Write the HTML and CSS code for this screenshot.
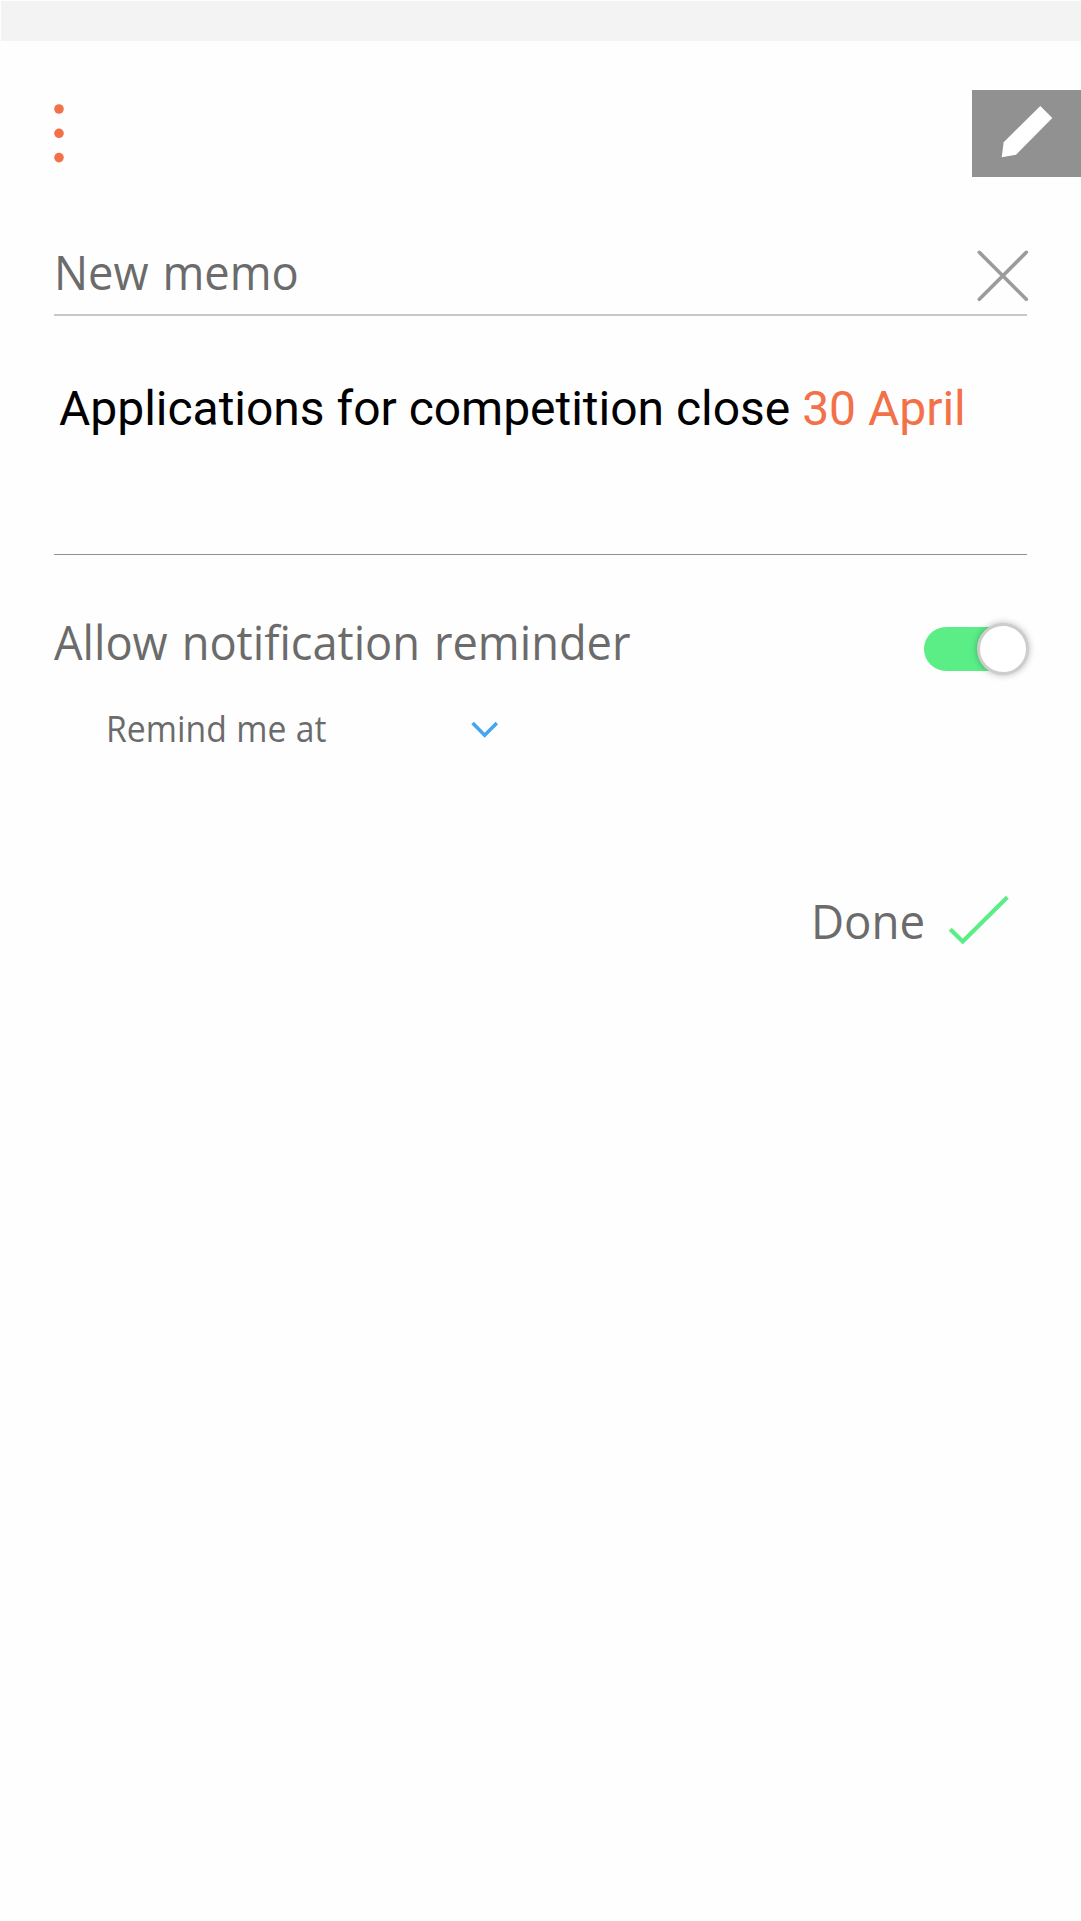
FILE: index.html
```html
<!DOCTYPE html>
<html lang="en">
<head>
<meta charset="utf-8">
<title>New memo</title>
<link rel="stylesheet" href="styles.css">
</head>
<body>
<div class="status-bar"></div>
<header class="top-bar">
  <button class="menu" aria-label="Menu"><svg width="10" height="60" viewBox="0 0 10 60"><circle cx="5" cy="6" r="4.8"/><circle cx="5" cy="30.3" r="4.8"/><circle cx="5" cy="54.6" r="4.8"/></svg></button>
  <button class="edit" aria-label="Edit"><svg width="109" height="87" viewBox="0 0 109 87"><path d="M68.3 16 80.3 28 44 64.7 29.7 67.3 31.7 52.3Z"/></svg></button>
</header>
<main class="memo">
  <div class="title-row">
    <span class="label title">New memo</span>
    <button class="close" aria-label="Close"><svg width="52" height="52" viewBox="0 0 52 52"><path d="M2.3 3.3 49.3 50.3M49.3 3.3 2.3 50.3"/></svg></button>
  </div>
  <p class="body-text">Applications for competition close <span class="date">30 April</span></p>
  <div class="toggle-row">
    <span class="label allow">Allow notification reminder</span>
    <span class="switch"><span class="knob"></span></span>
  </div>
  <div class="remind-row">
    <span class="label remind">Remind me at</span>
    <svg class="chevron" width="30" height="20" viewBox="0 0 30 20"><path d="M2.6 3 14.7 15.3 26.8 3"/></svg>
  </div>
  <button class="done-row">
    <span class="label done">Done</span>
    <svg class="check" width="64" height="50" viewBox="0 0 64 50"><path d="M3.2 35.3 15.7 47.5 60.3 3.3"/></svg>
  </button>
</main>
</body>
</html>
```
FILE: styles.css
```css
* { box-sizing: border-box; }
body { margin: 0; min-height: 1921px; background: #fefefe; }
button { border: 0; padding: 0; margin: 0; background: none; }
svg { display: block; }
.status-bar { height: 40px; margin: 1px 0 0 1px; background: #f3f3f3; }
.top-bar { display: flex; justify-content: space-between; align-items: flex-start; padding: 49px 0 0 54px; height: 136px; }
.menu { padding-top: 13px; }
.menu svg { fill: #f37148; }
.edit { background: #919191; }
.edit svg { fill: #fff; }
.memo { display: flex; flex-direction: column; padding: 0 54px; }
/* Slightly condensed label face */
.label { font-family: "Open Sans", "Noto Sans", sans-serif; color: #6b6b6b; font-size: 48px; line-height: 64px; word-spacing: .05em; white-space: nowrap; transform: scaleX(.942); transform-origin: 0 0; }
.title-row { display: flex; justify-content: space-between; align-items: flex-start; height: 139px; padding-top: 63px; border-bottom: 2px solid #c8c8c8; }
.close { padding-top: 9px; margin-right: -2px; }
.close svg { fill: none; stroke: #9b9b9b; stroke-width: 3.6; stroke-linecap: round; }
.body-text { margin: 0; height: 239px; padding: 65px 0 0 5px; border-bottom: 1px solid #919191; font: 48px/56px Roboto, sans-serif; letter-spacing: -.02px; color: #000; white-space: nowrap; }
.date { color: #f37148; }
.toggle-row { display: flex; justify-content: space-between; align-items: flex-start; height: 134px; padding-top: 55px; }
.switch { display: flex; justify-content: flex-end; align-items: center; width: 103px; height: 44px; margin-top: 17px; border-radius: 22px; background: #5bee87; }
.knob { flex: none; width: 52px; height: 52px; margin-right: -2px; border: 3px solid #cdcdcd; border-radius: 50%; background: #fff; box-shadow: 0 0 7px rgba(0, 0, 0, .28); }
.remind-row { display: flex; align-items: flex-start; height: 200px; padding-left: 52px; }
.remind { width: 364px; font-size: 36px; line-height: 48px; padding-top: 16px; word-spacing: .02em; transform: scaleX(.937); }
.chevron { margin-top: 31px; fill: none; stroke: #44a5f0; stroke-width: 3.5; }
.done-row { display: flex; align-self: flex-end; align-items: flex-start; margin-right: 16px; }
.done { width: 136px; text-align: left; transform: scaleX(.95); }
.check { margin-top: 5px; fill: none; stroke: #5bee87; stroke-width: 4.2; }
```
